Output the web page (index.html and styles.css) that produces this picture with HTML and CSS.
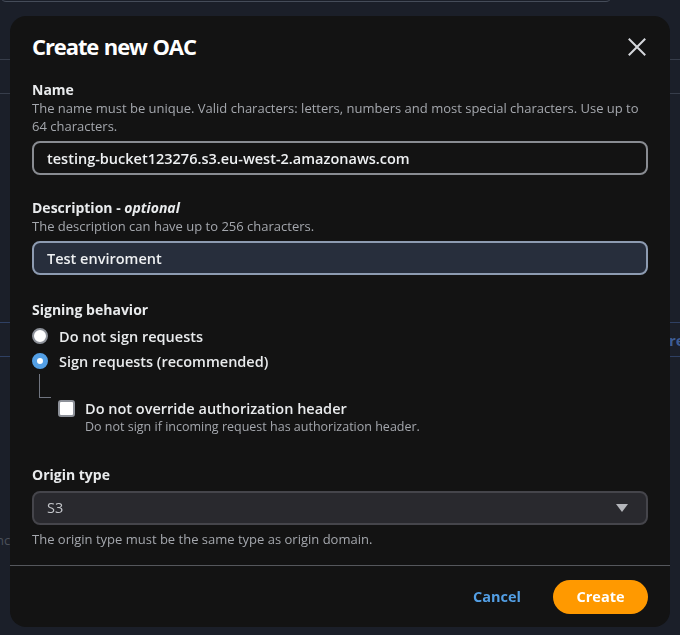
FILE: index.html
```html
<!DOCTYPE html>
<html lang="en">
<head>
<meta charset="utf-8">
<title>Create new OAC</title>
<link rel="stylesheet" href="styles.css">
</head>
<body>
<div class="backdrop">
  <div class="bg-field"></div>
  <div class="bg-line bg-line-1"></div>
  <div class="bg-line bg-line-2"></div>
  <div class="bg-row">
    <span class="bg-link">re</span>
  </div>
  <div class="bg-note">nc</div>
</div>

<div class="modal" role="dialog" aria-labelledby="modal-title">
  <div class="modal-header">
    <h2 id="modal-title" class="modal-title">Create new OAC</h2>
    <button class="close-btn" aria-label="Close">
      <svg width="18" height="18" viewBox="0 0 18 18"><path d="M1.5 1.5 L16.5 16.5 M16.5 1.5 L1.5 16.5" stroke="#d5d7dc" stroke-width="2" fill="none" stroke-linecap="square"/></svg>
    </button>
  </div>

  <div class="modal-body">
    <div class="field">
      <div class="label">Name</div>
      <div class="desc">The name must be unique. Valid characters: letters, numbers and most special characters. Use up to 64 characters.</div>
      <div class="input">testing-bucket123276.s3.eu-west-2.amazonaws.com</div>
    </div>

    <div class="field">
      <div class="label">Description - <i>optional</i></div>
      <div class="desc">The description can have up to 256 characters.</div>
      <div class="input input-focus">Test enviroment</div>
    </div>

    <div class="field field-signing">
      <div class="label">Signing behavior</div>
      <div class="radios">
        <div class="radio-row"><span class="radio"></span><span class="radio-label">Do not sign requests</span></div>
        <div class="radio-row"><span class="radio radio-on"></span><span class="radio-label">Sign requests (recommended)</span></div>
        <div class="sub-option">
          <span class="connector"></span>
          <div class="check-row">
            <span class="checkbox"></span>
            <div class="check-text">
              <div class="check-label">Do not override authorization header</div>
              <div class="check-desc">Do not sign if incoming request has authorization header.</div>
            </div>
          </div>
        </div>
      </div>
    </div>

    <div class="field field-origin">
      <div class="label">Origin type</div>
      <div class="select">
        <span>S3</span>
        <svg width="14" height="10" viewBox="0 0 14 10"><path d="M1 1 L13 1 L7 9 Z" fill="#b4b6bb"/></svg>
      </div>
      <div class="desc desc-after">The origin type must be the same type as origin domain.</div>
    </div>
  </div>

  <div class="modal-footer">
    <button class="btn-link">Cancel</button>
    <button class="btn-primary">Create</button>
  </div>
</div>
</body>
</html>
```

FILE: styles.css
```css
* { box-sizing: border-box; }

html, body {
  margin: 0;
  padding: 0;
}

body {
  width: 680px;
  height: 635px;
  overflow: hidden;
  background: #1b1f29;
  font-family: "Open Sans", "Noto Sans", sans-serif;
  color: #d5d7dc;
}

/* ---------- backdrop page (dimmed) ---------- */
.backdrop {
  width: 680px;
  height: 635px;
}

.bg-field {
  width: 612px;
  height: 12px;
  margin-top: -10px;
  border: 1px solid #454c59;
  border-radius: 8px;
}

.bg-line {
  height: 1px;
  background: #373d4a;
}
.bg-line-1 { margin-top: 57px; }
.bg-line-2 { margin-top: 33px; }

.bg-row {
  margin-top: 228px;
  height: 35px;
  border-top: 1px solid #2f4063;
  border-bottom: 1px solid #2f4063;
  padding-left: 669px;
  display: flex;
  align-items: center;
  white-space: nowrap;
  overflow: hidden;
}
.bg-link {
  color: #3e5c94;
  font-weight: 700;
  font-size: 15px;
}
.bg-note {
  margin-top: 174px;
  margin-left: -4px;
  color: #4b505a;
  font-size: 13px;
}

/* ---------- modal ---------- */
.modal {
  position: fixed;
  left: 10px;
  top: 16px;
  width: 660px;
  height: 611px;
  background: #131313;
  border-radius: 16px;
  display: flex;
  flex-direction: column;
}

.modal-header {
  display: flex;
  justify-content: space-between;
  align-items: flex-start;
  padding: 15px 24px 0 22px;
}

.modal-title {
  margin: 0;
  font-size: 22px;
  line-height: 30px;
  font-weight: 700;
  color: #ffffff;
  letter-spacing: -1.1px;
  word-spacing: 1px;
}

.close-btn {
  background: none;
  border: 0;
  padding: 0;
  margin-top: 7px;
  width: 18px;
  height: 18px;
  display: flex;
}

.modal-body {
  padding: 0 22px;
  flex: 1;
}

.field { margin-top: 24px; }
.field:first-child { margin-top: 20px; }
.field-signing { margin-top: 26px; }

.label {
  font-size: 14px;
  line-height: 18px;
  font-weight: 700;
  color: #e9ebed;
}
.label i { font-weight: 700; }

.desc {
  font-size: 13px;
  line-height: 18px;
  color: #a4a7ad;
  margin-bottom: 6px;
}
.desc-after { margin-top: 5px; margin-bottom: 0; }

.input {
  height: 34px;
  border: 2px solid #898c92;
  border-radius: 8px;
  padding: 0 13px;
  display: flex;
  align-items: center;
  font-size: 14.5px;
  color: #eef0f2;
  font-weight: 600;
}
.input-focus {
  background: #272e3c;
  border-color: #8d9bb1;
}

.radios { margin-top: 4.5px; }

.radio-row {
  display: flex;
  align-items: center;
  height: 25px;
}

.radio {
  width: 16px;
  height: 16px;
  border-radius: 50%;
  background: #ffffff;
  border: 2px solid #8d9199;
  margin: 0 11px 0 0;
  flex: none;
}
.radio-on {
  background: #ffffff;
  border: 5px solid #539fe5;
}

.radio-label {
  font-size: 14.5px;
  font-weight: 600;
  color: #e9ebed;
}

.sub-option {
  display: flex;
  flex-direction: column;
}

.connector {
  display: block;
  width: 12px;
  height: 24px;
  margin-left: 7px;
  border-left: 1px solid #707580;
  border-bottom: 1px solid #707580;
}

.check-row {
  display: flex;
  align-items: flex-start;
  margin-top: 2px;
  margin-left: 26px;
}

.checkbox {
  width: 17px;
  height: 17px;
  border-radius: 3px;
  border: 2px solid #8d9199;
  background: #ffffff;
  flex: none;
  margin-right: 10px;
}

.check-label {
  font-size: 14.5px;
  line-height: 17px;
  font-weight: 600;
  color: #e9ebed;
}
.check-desc {
  font-size: 12.5px;
  line-height: 18px;
  color: #a4a7ad;
  margin-top: 1px;
}

.field-origin { margin-top: 30px; }
.field-origin .label { margin-bottom: 7px; }

.select {
  height: 34px;
  background: #29292e;
  border: 2px solid #45454b;
  border-radius: 8px;
  padding: 0 17px 0 13px;
  display: flex;
  align-items: center;
  justify-content: space-between;
  font-size: 14.5px;
  color: #c3c5c9;
}

.modal-footer {
  height: 62px;
  border-top: 1px solid #55575c;
  display: flex;
  align-items: center;
  justify-content: flex-end;
  padding: 0 22px 0 0;
}

.btn-link {
  background: none;
  border: 0;
  font-family: inherit;
  font-size: 14.5px;
  font-weight: 700;
  color: #539fe5;
  margin-right: 32px;
  padding: 0;
}

.btn-primary {
  width: 95px;
  height: 34px;
  border: 0;
  border-radius: 17px;
  background: #ff9900;
  color: #ffffff;
  font-family: inherit;
  font-size: 14.5px;
  font-weight: 700;
}
```
